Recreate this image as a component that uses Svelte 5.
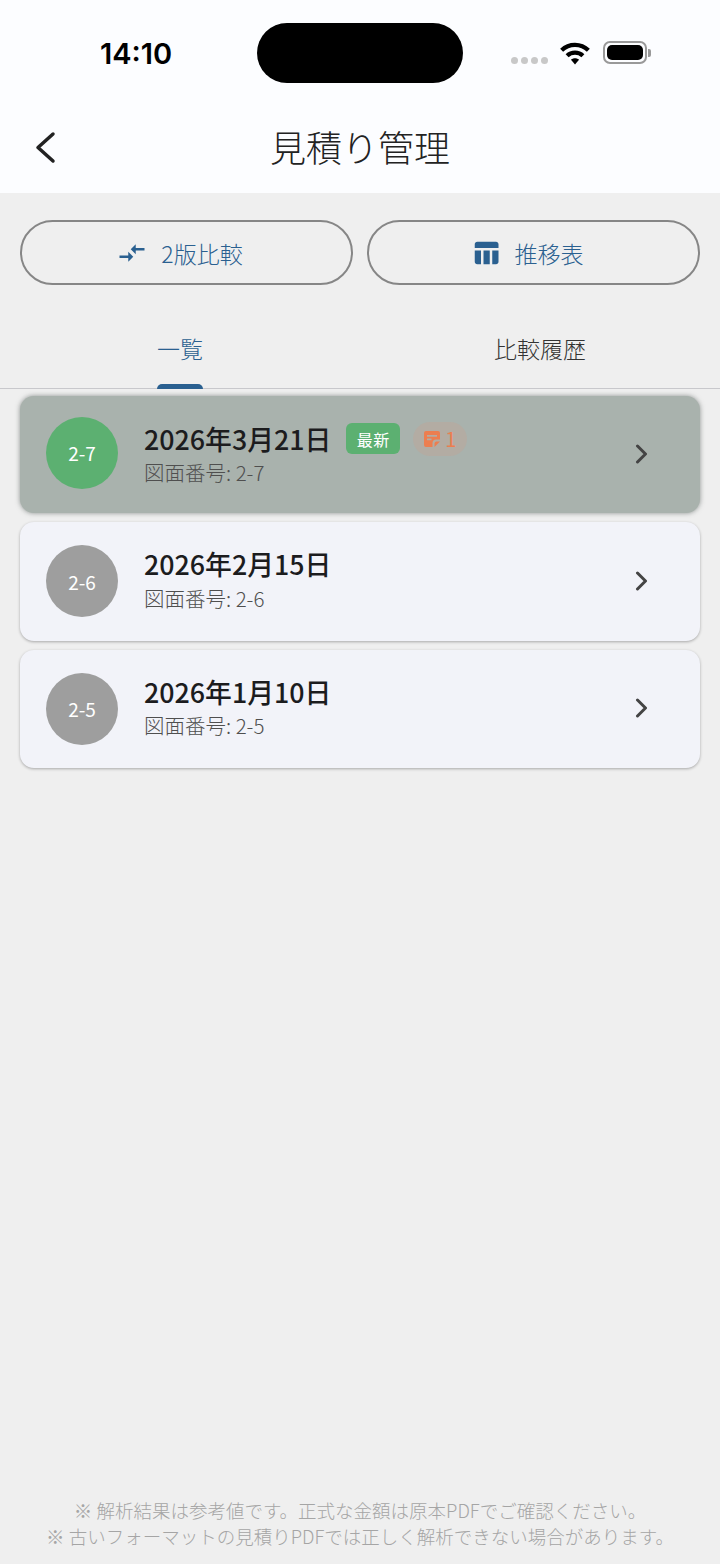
<script lang="ts">
	const estimates = [
		{ code: '2-7', date: '2026年3月21日', latest: true, notes: 1 },
		{ code: '2-6', date: '2026年2月15日', latest: false, notes: 0 },
		{ code: '2-5', date: '2026年1月10日', latest: false, notes: 0 }
	];
</script>

<div class="page">
	<header class="top">
		<div class="status">
			<span class="time">14:10</span>
			<div class="island"></div>
			<div class="status-icons">
				<div class="signal"><i></i><i></i><i></i><i></i></div>
				<svg class="wifi" width="32" height="24" viewBox="2 2 28 21">
					<path d="M16 3.500c5 0 9.500 1.900 13 5.200l-2.600 2.800A15 15 0 0 0 16 7.300a15 15 0 0 0-10.400 4.200L3 8.700A18.800 18.800 0 0 1 16 3.500z" />
					<path d="M16 10.300c3.200 0 6 1.200 8.200 3.200l-2.600 2.800a8.300 8.300 0 0 0-11.200 0l-2.600-2.800c2.200-2 5-3.200 8.200-3.200z" />
					<path d="M16 17c1.400 0 2.600.5 3.500 1.300L16 22.500l-3.500-4.200c.9-.8 2.100-1.300 3.500-1.300z" />
				</svg>
				<div class="battery"><div class="level"></div></div>
				<div class="cap"></div>
			</div>
		</div>
		<div class="nav">
			<svg class="back" width="30" height="36" viewBox="0 0 30 36">
				<path d="M23 4 8 17.500 23 31" />
			</svg>
			<h1>見積り管理</h1>
		</div>
	</header>

	<div class="actions">
		<button>
			<svg width="30" height="30" viewBox="0 0 24 24">
				<path d="M9.010 14H2v2h7.010v3L13 15l-3.990-4v3zm5.980-1v-3H22V8h-7.010V5L11 9l3.990 4z" />
			</svg>
			<span>2版比較</span>
		</button>
		<button>
			<svg width="30" height="30" viewBox="0 0 24 24">
				<path d="M10 10.020h5V21h-5zM17 21h3c1.100 0 2-.9 2-2v-9h-5v11zm3-18H5c-1.100 0-2 .9-2 2v3h19V5c0-1.100-.9-2-2-2zM3 19c0 1.100.9 2 2 2h3V10H3v9z" />
			</svg>
			<span>推移表</span>
		</button>
	</div>

	<nav class="tabs">
		<div class="tab active"><span>一覧</span><b></b></div>
		<div class="tab"><span>比較履歴</span></div>
	</nav>

	<ul class="list">
		{#each estimates as item}
			<li class="card" class:highlight={item.latest}>
				<div class="avatar" class:green={item.latest}>{item.code}</div>
				<div class="body">
					<div class="title">
						<span class="date">{item.date}</span>
						{#if item.latest}
							<span class="latest">最新</span>
						{/if}
						{#if item.notes}
							<span class="notes">
								<svg width="16" height="16" viewBox="0 0 16 16">
									<path d="M2 0h12a2 2 0 0 1 2 2v6.500h-4a3.500 3.500 0 0 0-3.500 3.500v4H2a2 2 0 0 1-2-2V2a2 2 0 0 1 2-2zM3 4v1.800h10V4zm0 3.500v1.800h4.500V7.500z" fill-rule="evenodd" />
									<path d="M10.500 16v-3.500a2 2 0 0 1 2-2H16z" />
								</svg>
								{item.notes}
							</span>
						{/if}
					</div>
					<div class="sub">図面番号: {item.code}</div>
				</div>
				<svg class="chevron" width="16" height="20" viewBox="0 0 16 20">
					<path d="M3.500 2 11.500 10 3.500 18" />
				</svg>
			</li>
		{/each}
	</ul>

	<footer>
		<p>※ 解析結果は参考値です。正式な金額は原本PDFでご確認ください。</p>
		<p>※ 古いフォーマットの見積りPDFでは正しく解析できない場合があります。</p>
	</footer>
</div>

<style>
	:global(body) {
		margin: 0;
		background: #efefef;
	}

	.page {
		height: 1564px;
		display: flex;
		flex-direction: column;
		background: #efefef;
		font-family: 'Noto Sans CJK JP', 'Noto Sans', sans-serif;
		overflow: hidden;
	}

	.top {
		height: 193px;
		background: #fcfdff;
		box-sizing: border-box;
		padding-top: 23px;
	}

	.status {
		height: 60px;
		display: flex;
		align-items: center;
	}

	.time {
		width: 257px;
		box-sizing: border-box;
		padding-left: 100px;
		font-family: Inter, sans-serif;
		font-weight: 600;
		font-size: 29px;
		color: #000;
	}

	.island {
		width: 206px;
		height: 60px;
		border-radius: 30px;
		background: #000;
	}

	.status-icons {
		display: flex;
		align-items: center;
		margin-left: 48px;
		margin-top: -1px;
	}

	.signal {
		display: flex;
		gap: 3px;
		margin-top: 15px;
		margin-right: 11px;
	}

	.signal i {
		width: 7px;
		height: 7px;
		border-radius: 50%;
		background: #c8c8c8;
	}

	.wifi {
		fill: #000;
		margin-right: 12px;
	}

	.battery {
		width: 36px;
		height: 15px;
		border: 2px solid #999;
		border-radius: 7px;
		padding: 2px;
		display: flex;
	}

	.level {
		flex: 1;
		background: #000;
		border-radius: 5px;
	}

	.cap {
		width: 3px;
		height: 8px;
		background: #999;
		border-radius: 0 2px 2px 0;
		margin-left: 1px;
	}

	.nav {
		position: relative;
		height: 110px;
		display: flex;
		align-items: center;
		justify-content: center;
	}

	.back {
		position: absolute;
		left: 30px;
		top: 47px;
		fill: none;
		stroke: #222;
		stroke-width: 3.500;
		stroke-linecap: round;
		stroke-linejoin: round;
	}

	h1 {
		margin: 16px 0 0;
		font-size: 36px;
		font-weight: 300;
		color: #222;
		line-height: 50px;
	}

	.actions {
		display: flex;
		gap: 14px;
		padding: 27px 20px 0;
	}

	.actions button {
		flex: 1;
		height: 65px;
		border: 2px solid #868686;
		border-radius: 33px;
		background: transparent;
		display: flex;
		align-items: center;
		justify-content: center;
		gap: 14px;
		font: inherit;
		font-size: 23px;
		font-weight: 300;
		color: #2a6090;
		padding: 0 13px 0 0;
	}

	.actions svg {
		fill: #2a6090;
	}

	.tabs {
		display: flex;
		height: 104px;
		border-bottom: 1px solid #c8c8cc;
		box-sizing: border-box;
		margin-bottom: 7px;
	}

	.tab {
		flex: 1;
		position: relative;
		text-align: center;
		font-size: 23px;
		font-weight: 300;
		color: #333;
		padding-top: 46px;
		line-height: 34px;
	}

	.tab.active {
		color: #2a6090;
	}

	.tab b {
		position: absolute;
		left: 157px;
		bottom: -1px;
		width: 46px;
		height: 5px;
		background: #2a6090;
		border-radius: 5px 5px 0 0;
	}

	.list {
		list-style: none;
		margin: 0;
		padding: 0 20px;
		display: flex;
		flex-direction: column;
		gap: 9px;
	}

	.card {
		height: 118.500px;
		box-sizing: border-box;
		display: flex;
		align-items: center;
		padding-left: 26px;
		padding-right: 50px;
		border-radius: 14px;
		background: #f2f3f9;
		box-shadow: 0 1px 3px rgba(0, 0, 0, 0.3);
	}

	.card.highlight {
		background: #a9b2ad;
		box-shadow: 0 0 5px rgba(60, 70, 65, 0.55);
		height: 117px;
	}

	.avatar {
		width: 72px;
		height: 72px;
		border-radius: 50%;
		background: #9e9e9e;
		color: #fff;
		font-size: 19px;
		display: flex;
		align-items: center;
		justify-content: center;
		flex-shrink: 0;
	}

	.avatar.green {
		background: #5cb071;
		margin-top: -4px;
	}

	.body {
		flex: 1;
		margin-left: 26px;
		margin-top: -6px;
	}

	.highlight .body {
		margin-top: -4px;
	}

	.title {
		display: flex;
		align-items: center;
		height: 38px;
	}

	.date {
		font-size: 26.800px;
		font-weight: 500;
		color: #1c1c1e;
	}

	.latest {
		margin-left: 15px;
		margin-top: 1px;
		width: 54px;
		height: 31px;
		border-radius: 6px;
		background: #5cb071;
		color: #fff;
		font-size: 16px;
		font-weight: 400;
		display: flex;
		align-items: center;
		justify-content: center;
		letter-spacing: 0.5px;
	}

	.notes {
		margin-left: 13px;
		margin-top: 1px;
		width: 54px;
		height: 34px;
		border-radius: 17px;
		background: #b3aca3;
		color: #ec7e50;
		font-size: 20px;
		display: flex;
		align-items: center;
		justify-content: center;
		gap: 5px;
	}

	.notes svg {
		fill: #ec7e50;
	}

	.sub {
		font-size: 20.500px;
		font-weight: 300;
		color: #4f4f4f;
		line-height: 28px;
		margin-top: 1px;
	}

	.chevron {
		fill: none;
		stroke: #444;
		stroke-width: 3;
		stroke-linecap: round;
		stroke-linejoin: round;
		margin-top: -1px;
	}

	footer {
		margin-top: auto;
		padding-bottom: 15px;
		text-align: center;
		font-size: 18.500px;
		font-weight: 300;
		color: #a5a5a5;
		line-height: 26px;
	}

	footer p {
		margin: 0;
	}
</style>
